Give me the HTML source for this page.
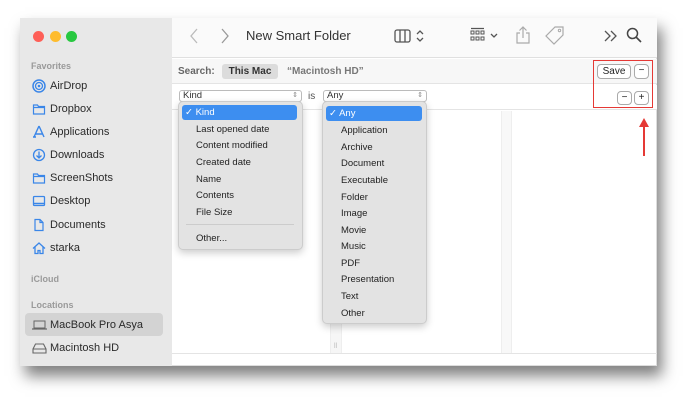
<!DOCTYPE html><html><head><style>
*{margin:0;padding:0;box-sizing:border-box}
body{width:700px;height:409px;background:#fff;position:relative;overflow:hidden;font-family:"Liberation Sans",sans-serif;color:#222}
.a{position:absolute}
.win{left:20px;top:18px;width:637px;height:348px;background:#fff;box-shadow:5px 10px 14px rgba(0,0,0,.5);border:1px solid #ddd}
.sb{left:20px;top:18px;width:152px;height:348px;background:#e8e8e8}
.si{position:absolute;left:32px;font-size:11px;color:#2a2a2a;height:20px;line-height:20px}
.si svg{position:absolute;left:0;top:3px}
.si span{position:absolute;left:18px;white-space:nowrap}
.hd{position:absolute;left:31px;font-size:9px;color:#9a9a9a;font-weight:bold}
.m{position:absolute;background:#e3e3e3;border:1px solid #ccc;border-radius:5px;box-shadow:0 3px 8px rgba(0,0,0,.2)}
.mi{position:absolute;font-size:9.5px;color:#222;white-space:nowrap}
.hl{position:absolute;background:#3d8ef0;border-radius:3px;color:#fff;font-size:9.5px;line-height:15px}
.btn{position:absolute;background:#fff;border:1px solid #aaa;border-radius:4px;font-size:10px;text-align:center}
</style></head><body>
<div class="a win"></div>
<div class="a sb"></div>
<div class="a" style="left:33px;top:31px;width:11px;height:11px;border-radius:50%;background:#fe5f57"></div>
<div class="a" style="left:50px;top:31px;width:11px;height:11px;border-radius:50%;background:#febc2e"></div>
<div class="a" style="left:66px;top:31px;width:11px;height:11px;border-radius:50%;background:#28c840"></div>
<div class="hd" style="top:61px">Favorites</div>
<div class="si" style="top:76px"><svg width="14" height="14"><circle cx="7" cy="7" r="6" fill="none" stroke="#3a86e8" stroke-width="1.5"/><circle cx="7" cy="7" r="3.5" fill="none" stroke="#3a86e8" stroke-width="1.3"/><circle cx="7" cy="7" r="1.3" fill="#3a86e8"/></svg><span>AirDrop</span></div>
<div class="si" style="top:99px"><svg width="14" height="14"><path d="M1.5 3h4l1 1.5h6v7.5h-11z M1.5 5.5h11" fill="none" stroke="#3a86e8" stroke-width="1.2"/></svg><span>Dropbox</span></div>
<div class="si" style="top:122px"><svg width="14" height="14"><path d="M7 1L2 12M7 1l5 11M3 9h8M1 12h3" fill="none" stroke="#3a86e8" stroke-width="1.4"/></svg><span>Applications</span></div>
<div class="si" style="top:145px"><svg width="14" height="14"><circle cx="7" cy="7" r="5.5" fill="none" stroke="#3a86e8" stroke-width="1.3"/><path d="M7 3.5v6M4.5 7.5L7 10l2.5-2.5" fill="none" stroke="#3a86e8" stroke-width="1.3"/></svg><span>Downloads</span></div>
<div class="si" style="top:168px"><svg width="14" height="14"><path d="M1.5 3h4l1 1.5h6v7.5h-11z M1.5 5.5h11" fill="none" stroke="#3a86e8" stroke-width="1.2"/></svg><span>ScreenShots</span></div>
<div class="si" style="top:191px"><svg width="14" height="14"><rect x="1.5" y="2.5" width="11" height="9" rx="1" fill="none" stroke="#3a86e8" stroke-width="1.3"/><path d="M2 9.5h10" stroke="#3a86e8" stroke-width="1.5"/></svg><span>Desktop</span></div>
<div class="si" style="top:215px"><svg width="14" height="14"><path d="M3 1.5h5l3 3v8H3z M8 1.5v3h3" fill="none" stroke="#3a86e8" stroke-width="1.2"/></svg><span>Documents</span></div>
<div class="si" style="top:238px"><svg width="14" height="14"><path d="M1 7.5L7 2l6 5.5M3 6v6.5h3v-3h2v3h3V6" fill="none" stroke="#3a86e8" stroke-width="1.3"/></svg><span>starka</span></div>
<div class="hd" style="top:274px">iCloud</div>
<div class="hd" style="top:300px">Locations</div>
<div class="a" style="left:25px;top:313px;width:138px;height:23px;background:#d3d3d3;border-radius:4px"></div>
<div class="si" style="top:315px"><svg width="16" height="14"><rect x="2" y="3" width="11" height="7" fill="none" stroke="#666" stroke-width="1"/><path d="M0 11h15" stroke="#666" stroke-width="1.2"/></svg><span>MacBook Pro Asya</span></div>
<div class="si" style="top:338px"><svg width="16" height="14"><path d="M1 8l2.5-5h8L14 8v4H1z M1 8h13" fill="none" stroke="#666" stroke-width="1.1"/></svg><span>Macintosh HD</span></div>
<!-- toolbar -->
<div class="a" style="left:172px;top:18px;width:485px;height:40px;background:#fafafa;border-bottom:1px solid #e0e0e0"></div>
<svg class="a" style="left:189px;top:28px" width="10" height="16"><path d="M8 1L2 8l6 7" fill="none" stroke="#bbb" stroke-width="1.3"/></svg>
<svg class="a" style="left:220px;top:28px" width="10" height="16"><path d="M2 1l6 7-6 7" fill="none" stroke="#999" stroke-width="1.3"/></svg>
<div class="a" style="left:246px;top:28px;font-size:13px;color:#333">New Smart Folder</div>
<svg class="a" style="left:393px;top:27px" width="40" height="18"><rect x="2" y="3" width="15" height="12" rx="2" fill="none" stroke="#555" stroke-width="1.3"/><path d="M7 3v12M12 3v12M24 7l3-3 3 3M24 11l3 3 3-3" fill="none" stroke="#555" stroke-width="1.3"/></svg>
<svg class="a" style="left:470px;top:27px" width="34" height="18"><g fill="none" stroke="#555" stroke-width="1"><rect x="1" y="4" width="3" height="3"/><rect x="6" y="4" width="3" height="3"/><rect x="11" y="4" width="3" height="3"/><rect x="1" y="10" width="3" height="3"/><rect x="6" y="10" width="3" height="3"/><rect x="11" y="10" width="3" height="3"/><path d="M1 1.5h13M21 7l3 3 3-3" stroke-width="1.3"/></g></svg>
<svg class="a" style="left:515px;top:25px" width="16" height="20"><path d="M8 2v11M4.5 5.5L8 2l3.5 3.5M5 8H2v10h12V8h-3" fill="none" stroke="#aaa" stroke-width="1.2"/></svg>
<svg class="a" style="left:544px;top:25px" width="22" height="20"><path d="M11 2h8v8l-9 9-8-8z" fill="none" stroke="#aaa" stroke-width="1.2"/><circle cx="15.5" cy="5.5" r="1.2" fill="none" stroke="#aaa"/></svg>
<svg class="a" style="left:603px;top:29px" width="16" height="14"><path d="M2 2l5 5-5 5M8 2l5 5-5 5" fill="none" stroke="#555" stroke-width="1.3"/></svg>
<svg class="a" style="left:626px;top:27px" width="16" height="16"><circle cx="6.5" cy="6.5" r="5" fill="none" stroke="#444" stroke-width="1.5"/><path d="M10 10l5 5" stroke="#444" stroke-width="1.6"/></svg>
<!-- search row -->
<div class="a" style="left:172px;top:59px;width:485px;height:25px;background:#f7f7f7;border-bottom:1px solid #e4e4e4"></div>
<div class="a" style="left:178px;top:66px;font-size:10px;font-weight:bold;color:#666">Search:</div>
<div class="a" style="left:222px;top:64px;width:56px;height:15px;background:#dcdcdc;border-radius:3px;font-size:10px;font-weight:bold;color:#333;text-align:center;line-height:15px">This Mac</div>
<div class="a" style="left:287px;top:66px;font-size:10px;font-weight:bold;color:#777">“Macintosh HD”</div>
<div class="btn" style="left:597px;top:64px;width:34px;height:15px;line-height:13px">Save</div>
<div class="btn" style="left:634px;top:64px;width:15px;height:15px;line-height:12px">−</div>
<!-- criteria -->
<div class="a" style="left:172px;top:85px;width:485px;height:25px;background:#fff;border-bottom:1px solid #e4e4e4"></div>
<div class="a" style="left:179px;top:90px;width:123px;height:12px;border:1px solid #bbb;border-radius:3px;font-size:9.5px;line-height:10px;padding-left:3px;color:#333">Kind<span style="position:absolute;right:3px;font-size:7px;color:#888">⇕</span></div>
<div class="a" style="left:308px;top:91px;font-size:10px;color:#555">is</div>
<div class="a" style="left:323px;top:90px;width:104px;height:12px;border:1px solid #bbb;border-radius:3px;font-size:9.5px;line-height:10px;padding-left:3px;color:#333">Any<span style="position:absolute;right:3px;font-size:7px;color:#888">⇕</span></div>
<div class="btn" style="left:617px;top:91px;width:15px;height:14px;line-height:12px">−</div>
<div class="btn" style="left:634px;top:91px;width:15px;height:14px;line-height:12px">+</div>
<!-- columns -->
<div class="a" style="left:330px;top:111px;width:12px;height:242px;background:#f6f6f6;border-left:1px solid #eee;border-right:1px solid #eee"></div>
<div class="a" style="left:334px;top:343px;font-size:7px;color:#bbb">ll</div>
<div class="a" style="left:501px;top:111px;width:11px;height:242px;background:#f8f8f8;border-left:1px solid #eee;border-right:1px solid #eee"></div>
<div class="a" style="left:172px;top:353px;width:485px;height:1px;background:#e4e4e4"></div>
<!-- red box -->
<div class="a" style="left:593px;top:60px;width:60px;height:48px;border:1.5px solid #e53935"></div>
<div class="a" style="left:643px;top:124px;width:1.5px;height:32px;background:#e53935"></div>
<svg class="a" style="left:638px;top:118px" width="12" height="10"><path d="M6 0L1 9h10z" fill="#e53935"/></svg>
<!-- menu1 -->
<div class="m" style="left:178px;top:101px;width:125px;height:149px"></div>
<div class="hl" style="left:182px;top:105px;width:115px;height:15px;padding-left:3px">✓ Kind</div>
<div class="mi" style="left:196px;top:124px">Last opened date</div>
<div class="mi" style="left:196px;top:140px">Content modified</div>
<div class="mi" style="left:196px;top:157px">Created date</div>
<div class="mi" style="left:196px;top:174px">Name</div>
<div class="mi" style="left:196px;top:190px">Contents</div>
<div class="mi" style="left:196px;top:207px">File Size</div>
<div class="a" style="left:186px;top:224px;width:108px;height:1px;background:#ccc"></div>
<div class="mi" style="left:196px;top:233px">Other...</div>
<!-- menu2 -->
<div class="m" style="left:322px;top:101px;width:105px;height:223px"></div>
<div class="hl" style="left:326px;top:106px;width:96px;height:15px;padding-left:3px">✓ Any</div>
<div class="mi" style="left:341px;top:125px">Application</div>
<div class="mi" style="left:341px;top:142px">Archive</div>
<div class="mi" style="left:341px;top:158px">Document</div>
<div class="mi" style="left:341px;top:175px">Executable</div>
<div class="mi" style="left:341px;top:192px">Folder</div>
<div class="mi" style="left:341px;top:208px">Image</div>
<div class="mi" style="left:341px;top:225px">Movie</div>
<div class="mi" style="left:341px;top:241px">Music</div>
<div class="mi" style="left:341px;top:258px">PDF</div>
<div class="mi" style="left:341px;top:274px">Presentation</div>
<div class="mi" style="left:341px;top:291px">Text</div>
<div class="mi" style="left:341px;top:308px">Other</div>
</body></html>
